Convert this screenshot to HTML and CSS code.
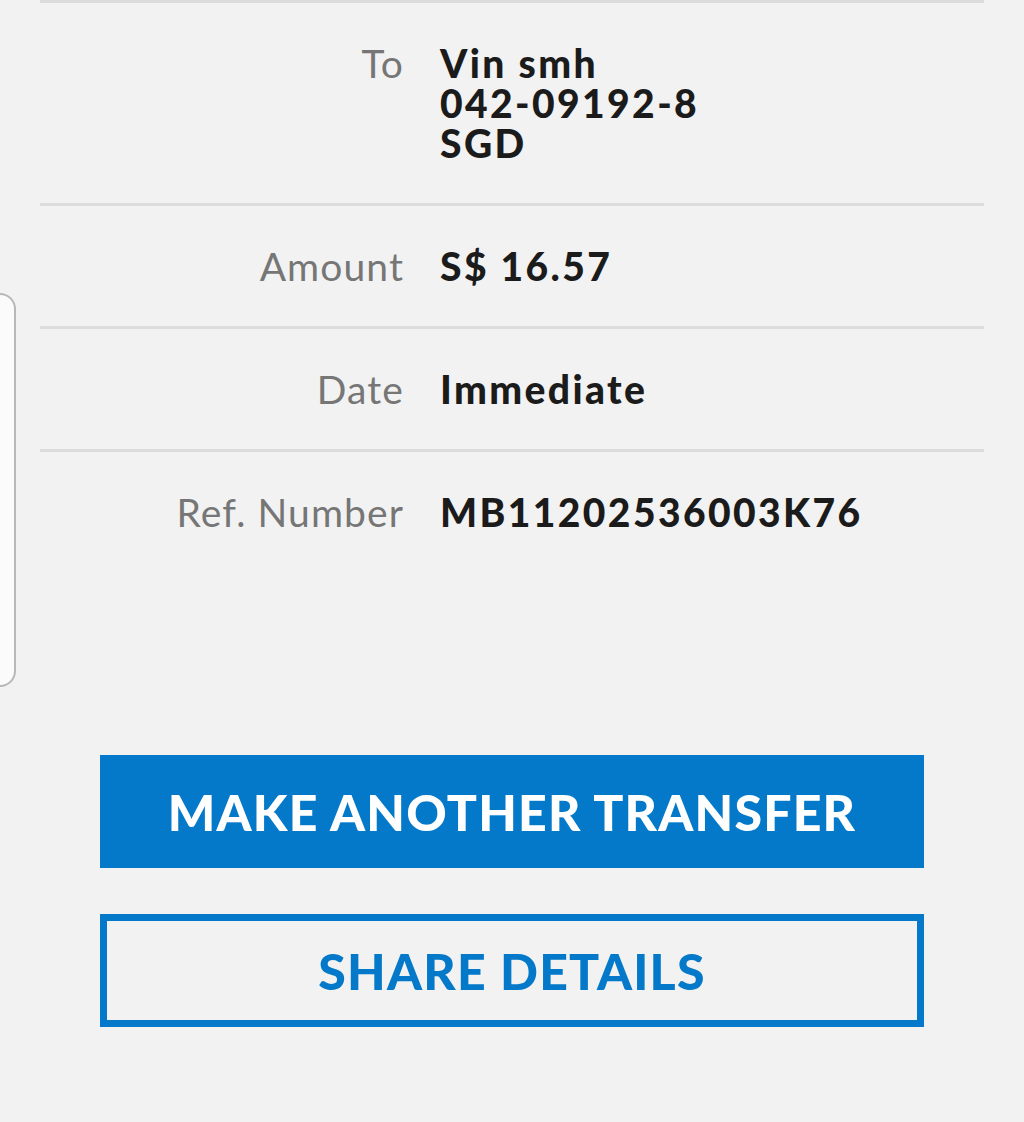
FILE: index.html
```html
<!DOCTYPE html>
<html>
<head>
<meta charset="utf-8">
<link rel="stylesheet" href="styles.css">
</head>
<body>
<div class="edge-panel"></div>
<div class="details">
  <div class="row">
    <div class="label">To</div>
    <div class="value">Vin smh<br>042-09192-8<br>SGD</div>
  </div>
  <div class="row">
    <div class="label">Amount</div>
    <div class="value">S$ 16.57</div>
  </div>
  <div class="row">
    <div class="label">Date</div>
    <div class="value">Immediate</div>
  </div>
  <div class="row last">
    <div class="label">Ref. Number</div>
    <div class="value">MB11202536003K76</div>
  </div>
</div>
<div class="actions">
  <button class="btn primary">MAKE ANOTHER TRANSFER</button>
  <button class="btn outline">SHARE DETAILS</button>
</div>
</body>
</html>
```
FILE: styles.css
```css
html, body {
  margin: 0;
  padding: 0;
  background: #f2f2f2;
}
body {
  font-family: Lato, "Open Sans", sans-serif;
  width: 1024px;
  height: 1122px;
  overflow: hidden;
  position: relative;
}
.edge-panel {
  position: absolute;
  left: -20px;
  top: 293px;
  width: 32px;
  height: 390px;
  background: #fbfbfb;
  border: 2px solid #b8b8b8;
  border-radius: 16px;
}
.details {
  margin: 0 40px;
  border-top: 3px solid #dcdcdc;
}
.row {
  display: flex;
  gap: 36px;
  padding: 40px 0;
  border-bottom: 3px solid #dcdcdc;
  font-size: 39px;
  line-height: 40px;
}
.row.last {
  border-bottom: none;
}
.label {
  width: 364px;
  flex: none;
  text-align: right;
  color: #767676;
  letter-spacing: 1.1px;
}
.value {
  color: #1b1b1b;
  font-weight: 900;
  letter-spacing: 2.4px;
}
.actions {
  display: flex;
  flex-direction: column;
  gap: 46px;
  margin: 183px 0 0 100px;
  width: 824px;
}
.btn {
  box-sizing: border-box;
  width: 824px;
  height: 113px;
  font-family: Lato, "Open Sans", sans-serif;
  font-weight: 900;
  font-size: 50px;
  letter-spacing: 1.2px;
  padding: 0;
  border-radius: 0;
  cursor: pointer;
}
.primary {
  background: #0479c9;
  color: #ffffff;
  border: none;
}
.outline {
  background: #f2f2f2;
  color: #0479c9;
  border: 7px solid #0479c9;
}
```
